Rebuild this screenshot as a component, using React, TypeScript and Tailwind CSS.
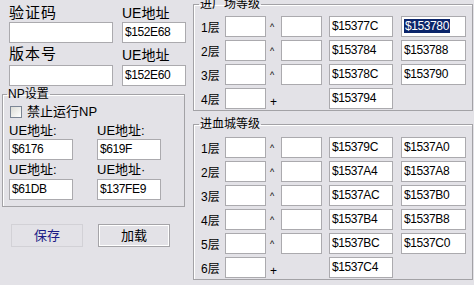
import React from 'react';

const font = "font-['Liberation_Sans','Noto_Sans_CJK_SC',sans-serif]";
const box = 'h-[21px] bg-white border border-[#abaaae] px-[2px] text-[12px] leading-[19px] tracking-[-0.4px] text-black whitespace-nowrap overflow-hidden';

type Row = { n: string; a?: string; b?: string; last?: boolean; sel?: boolean };

function LevelRow({ n, a, b, last, sel }: Row) {
  return (
    <div className="flex items-center h-[21px]">
      <span className="w-[24px] text-[12px] leading-[14px] pt-[3px]">{n}</span>
      <div className={`${box} w-[41px]`} />
      <span className={`w-[15px] pl-[4px] ${last ? 'text-[12px] leading-[12px] pt-[6px]' : 'text-[9px] leading-[9px] pt-[2px]'}`}>
        {last ? '+' : '^'}
      </span>
      {last ? <div className="w-[41px]" /> : <div className={`${box} w-[41px]`} />}
      <div className={`${box} w-[64px] ml-[7px]`}>{a}</div>
      {b !== undefined && (
        <div className={`${box} w-[65px] ml-[8px]`}>
          {sel ? <span className="bg-[#0a246a] text-white px-[1px]">{b}</span> : b}
        </div>
      )}
    </div>
  );
}

function GroupBox({ title, rows, className, top }: { title: string; rows: Row[]; className: string; top: string }) {
  return (
    <fieldset className={`w-[280px] border border-[#a3a2a6] shadow-[inset_1px_1px_0_#fff] p-0 pb-[1px] ${className}`}>
      <legend className="ml-[5px] px-[1px] text-[12px] leading-[14px]">{title}</legend>
      <div className={`pl-[7px] ${top} flex flex-col gap-[3px]`}>
        {rows.map((r) => (
          <LevelRow key={r.n} {...r} />
        ))}
      </div>
    </fieldset>
  );
}

export default function App() {
  const factory: Row[] = [
    { n: '1层', a: '$15377C', b: '$153780', sel: true },
    { n: '2层', a: '$153784', b: '$153788' },
    { n: '3层', a: '$15378C', b: '$153790' },
    { n: '4层', a: '$153794', last: true },
  ];
  const blood: Row[] = [
    { n: '1层', a: '$15379C', b: '$1537A0' },
    { n: '2层', a: '$1537A4', b: '$1537A8' },
    { n: '3层', a: '$1537AC', b: '$1537B0' },
    { n: '4层', a: '$1537B4', b: '$1537B8' },
    { n: '5层', a: '$1537BC', b: '$1537C0' },
    { n: '6层', a: '$1537C4', last: true },
  ];

  return (
    <div className={`w-[474px] h-[285px] bg-[#e3e2e7] flex overflow-hidden text-black ${font}`}>
      {/* left column */}
      <div className="w-[193px] shrink-0 flex flex-col">
        <div className="pl-[9px] pt-[4px] grid grid-cols-[104px_64px] gap-x-[9px]">
          <span className="text-[15px] leading-[18px] tracking-[1px]">验证码</span>
          <span className="text-[14px] leading-[18px]">UE地址</span>
          <div className={box} />
          <div className={box}>$152E68</div>
          <span className="text-[15px] leading-[20px] tracking-[1px] pt-[1px]">版本号</span>
          <span className="text-[14px] leading-[20px] pt-[2px]">UE地址</span>
          <div className={box} />
          <div className={box}>$152E60</div>
        </div>

        {/* NP settings */}
        <fieldset className="ml-[2px] mt-[1px] w-[183px] border border-[#a3a2a6] shadow-[inset_1px_1px_0_#fff] p-0">
          <legend className="ml-[4px] px-[1px] text-[12px] leading-[14px]">NP设置</legend>
          <div className="pl-[6px] pt-[3px] pb-[6px]">
            <label className="flex items-center gap-[5px] ml-[1px] h-[16px]">
              <span className="w-[12px] h-[12px] border border-[#7b8594] bg-gradient-to-br from-[#dcdcd6] to-white" />
              <span className="text-[13px] leading-[16px]">禁止运行NP</span>
            </label>
            <div className="grid grid-cols-[64px_64px] gap-x-[24px]">
              <span className="text-[13px] leading-[17px] pt-[2px]">UE地址:</span>
              <span className="text-[13px] leading-[17px] pt-[2px]">UE地址:</span>
              <div className={box}>$6176</div>
              <div className={box}>$619F</div>
              <span className="text-[13px] leading-[18px] pt-[1px]">UE地址:</span>
              <span className="text-[13px] leading-[18px] pt-[1px]">UE地址·</span>
              <div className={box}>$61DB</div>
              <div className={box}>$137FE9</div>
            </div>
          </div>
        </fieldset>

        <div className="flex pl-[11px] gap-[15px] mt-[17px]">
          <button className="w-[72px] h-[23px] border border-[#d2d1d6] text-[13px] text-[#1c1c86]">保存</button>
          <button className="w-[72px] h-[23px] border border-[#a5a4a8] shadow-[inset_1px_1px_0_#fff,inset_-1px_-1px_0_#fff] text-[13px]">加载</button>
        </div>
      </div>

      {/* right column */}
      <div className="flex flex-col">
        <GroupBox title="进厂场等级" rows={factory} className="-mt-[3px]" top="pt-[5px]" />
        <GroupBox title="进血城等级" rows={blood} className="mt-[6px]" top="pt-[6px]" />
      </div>
    </div>
  );
}
